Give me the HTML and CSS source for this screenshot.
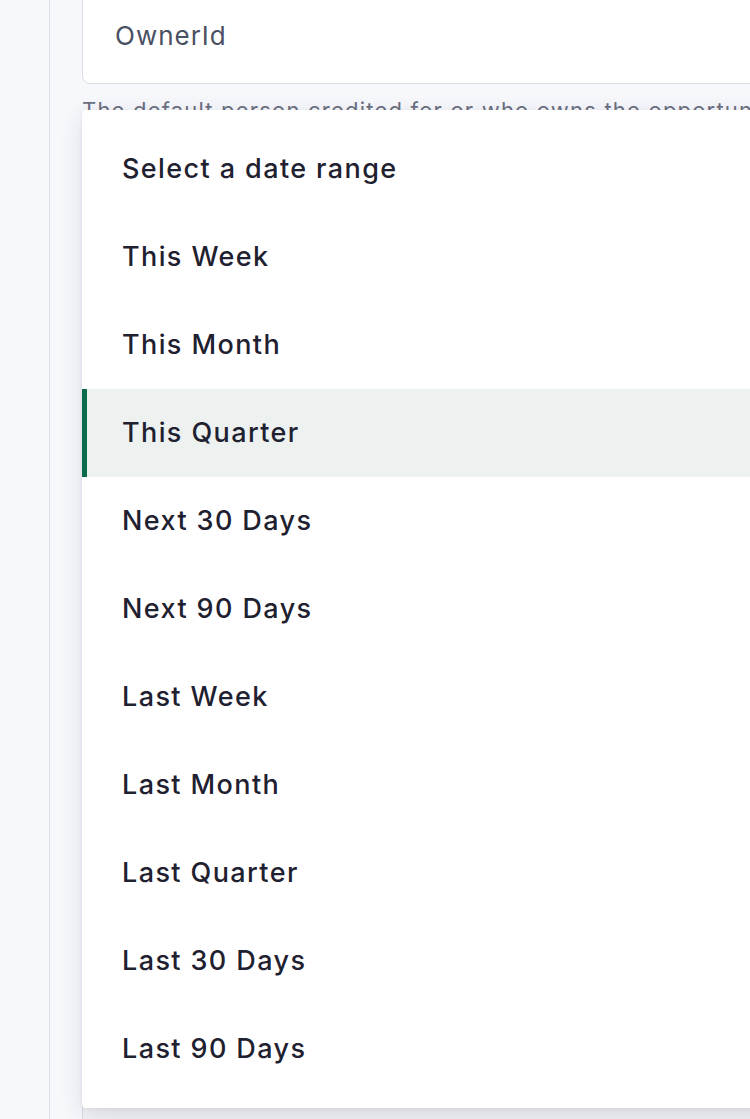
FILE: index.html
```html
<!DOCTYPE html>
<html lang="en">
  <head>
    <meta charset="UTF-8" />
    <meta name="viewport" content="width=device-width, initial-scale=1.0" />
    <title>Date Range Select</title>
    <link rel="stylesheet" href="styles.css">
  </head>
  <body>
    <div class="page">
      <aside class="rail"></aside>
      <main class="content">
        <div class="field">
          <div class="field-input">OwnerId</div>
          <p class="field-help">The default person credited for or who owns the opportunity record.</p>
          <div class="field-next"></div>
        </div>

        <ul class="menu" id="dateRangeMenu">
          <li class="menu-item">Select a date range</li>
          <li class="menu-item">This Week</li>
          <li class="menu-item">This Month</li>
          <li class="menu-item is-active">This Quarter</li>
          <li class="menu-item">Next 30 Days</li>
          <li class="menu-item">Next 90 Days</li>
          <li class="menu-item">Last Week</li>
          <li class="menu-item">Last Month</li>
          <li class="menu-item">Last Quarter</li>
          <li class="menu-item">Last 30 Days</li>
          <li class="menu-item">Last 90 Days</li>
        </ul>
      </main>
    </div>
  </body>
</html>
```

FILE: styles.css
```css
html,
body {
  margin: 0;
  padding: 0;
  height: 100%;
  overflow: hidden;
}
body {
  background: #f7f8fc;
  font-family: Inter, "Noto Sans", sans-serif;
  color: #1f2130;
}
.page {
  display: flex;
  height: 1119px;
}
.rail {
  width: 49px;
  flex-shrink: 0;
  border-right: 1px solid #dcdde8;
}
.content {
  position: relative; /* anchor for the open menu */
  flex: 1;
  padding-left: 32px;
  overflow: hidden;
}
.field {
  margin-top: -21px;
  width: 720px;
}
.field-input {
  height: 105px;
  box-sizing: border-box;
  padding: 41px 0 0 32px;
  background: #ffffff;
  border: 1px solid #d9dbe3;
  border-radius: 8px;
  font-size: 26px;
  line-height: 30px;
  letter-spacing: 1px;
  color: #4a5063;
}
.field-help {
  margin: 13px 0 0;
  font-size: 22px;
  line-height: 26px;
  letter-spacing: 1.2px;
  color: #6b7080;
  white-space: nowrap;
}
.field-next {
  margin-top: 960px;
  height: 60px;
  background: #f1f2f5;
  border: 1px solid #d9dbe3;
  border-radius: 8px;
}
.menu {
  position: absolute; /* dropdown floats over the form */
  top: 110px;
  left: 32px;
  width: 720px;
  margin: 0;
  padding: 15px 0;
  list-style: none;
  background: #ffffff;
  border-radius: 4px;
  box-shadow: 0 6px 24px rgba(30, 35, 60, 0.12), 0 1px 4px rgba(30, 35, 60, 0.06);
}
.menu-item {
  height: 88px;
  box-sizing: border-box;
  display: flex;
  align-items: center;
  padding: 0 0 2px 35px;
  border-left: 5px solid transparent;
  font-size: 27px;
  font-weight: 500;
  letter-spacing: 1.4px;
  color: #1f2130;
}
.menu-item.is-active {
  background: #edf2f0;
  border-left-color: #0b6a4b;
}
```
